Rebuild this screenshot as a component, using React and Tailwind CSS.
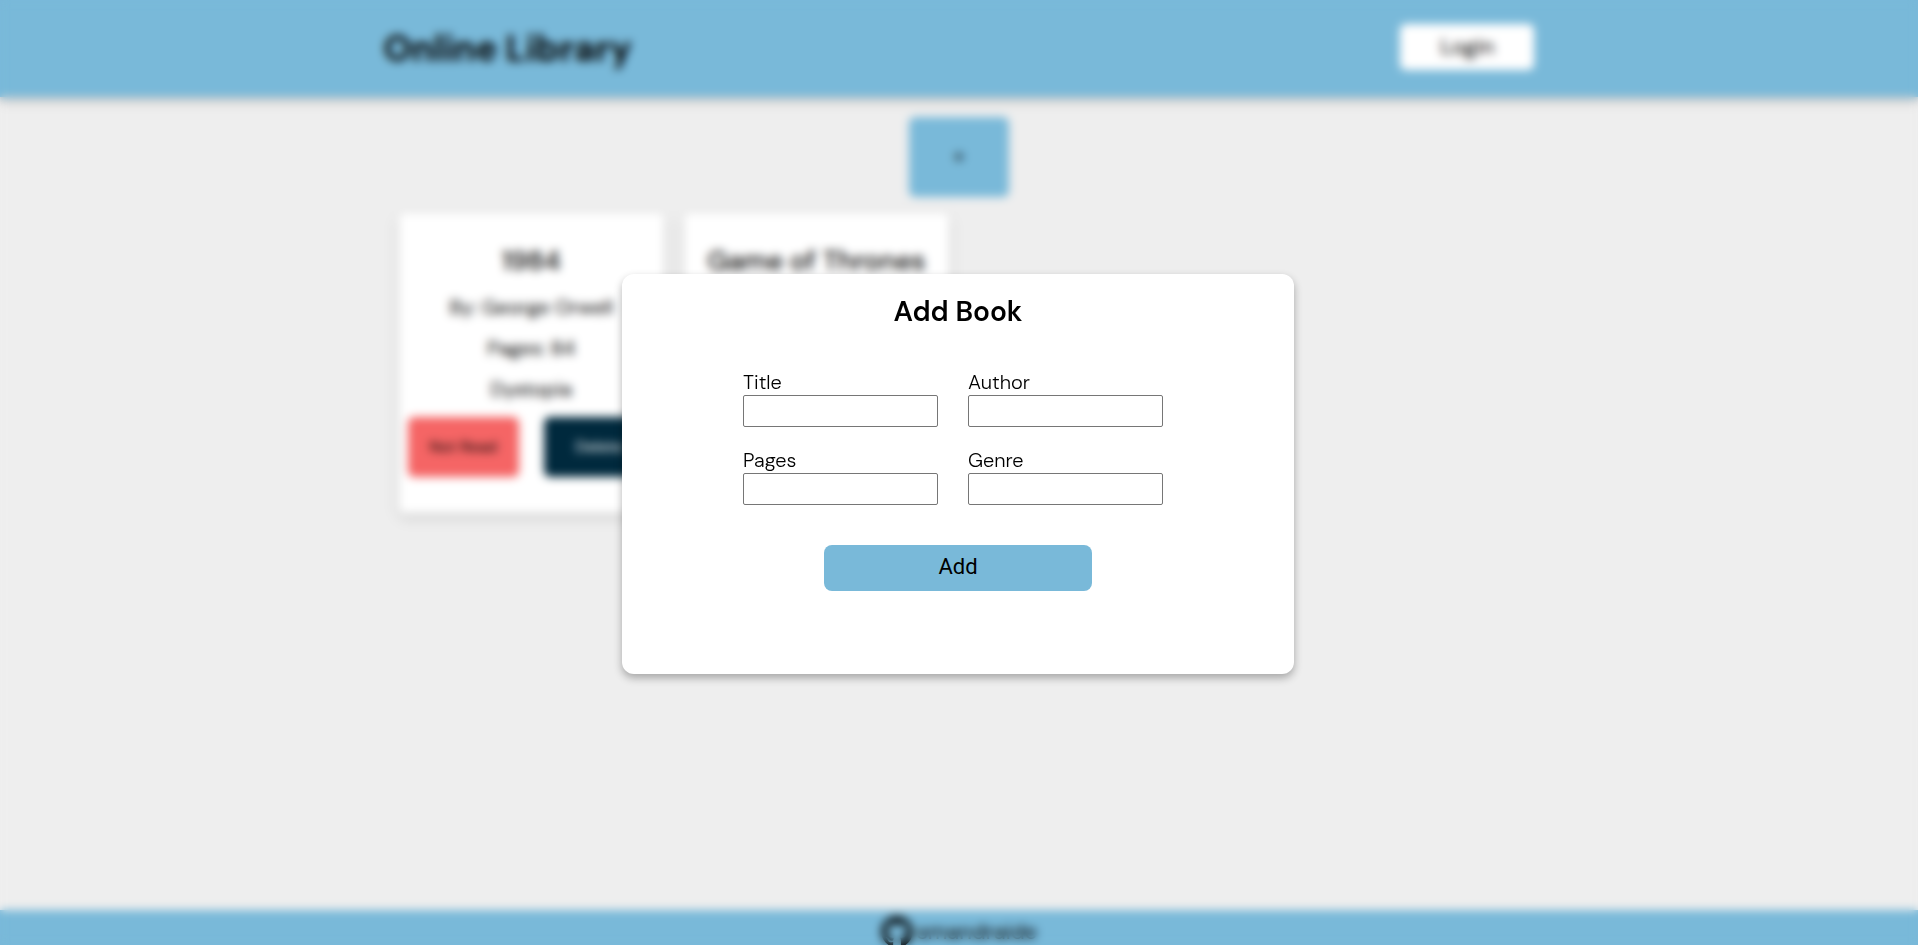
import { FaGithub } from "react-icons/fa";

const books = [
  { title: "1984", author: "George Orwell", pages: 84, genre: "Dystopia" },
  { title: "Game of Thrones", author: "George Martin", pages: 694, genre: "Fantasy" },
];

function Header() {
  return (
    <header className="bg-[#79b9d9] shadow-[0_4px_8px_rgba(0,0,0,0.2)]">
      <div className="mx-auto flex h-[97px] w-3/5 items-center justify-between">
        <h1 className="text-[36px] font-bold">Online Library</h1>
        <button type="button" className="mb-1 h-[46px] w-[134px] rounded-md bg-white text-[22px]">Login</button>
      </div>
    </header>
  );
}

function BookCard({ book }) {
  return (
    <article className="flex h-[300px] flex-col items-center rounded-md bg-white pt-7 text-xl shadow-[0_4px_12px_rgba(0,0,0,0.15)]">
      <h2 className="text-[27px] leading-10 font-medium whitespace-nowrap">{book.title}</h2>
      <div className="mt-3 flex flex-col items-center gap-[13px] leading-7">
        <p>By: {book.author}</p>
        <p>Pages: {book.pages}</p>
        <p>{book.genre}</p>
      </div>
      <div className="mt-[14px] flex w-full justify-between px-[9px] text-base">
        <button type="button" className="h-[60px] w-[111px] rounded-md bg-[#f56565]">Not Read</button>
        <button type="button" className="h-[60px] w-[111px] rounded-md bg-[#00293d] text-white">Delete</button>
      </div>
    </article>
  );
}

function Field({ id, label }) {
  return (
    <div className="flex flex-col">
      <label htmlFor={id} className="text-[20px] leading-[26px] font-light">{label}</label>
      <input id={id} type="text" className="h-8 rounded-[2px] border border-[#767676] bg-white px-2" />
    </div>
  );
}

function AddBookDialog() {
  return (
    <div className="fixed inset-0 flex items-center justify-center pt-[3px] pr-[2px] backdrop-blur-[5px]">
      <form
        role="dialog"
        aria-labelledby="dialog-title"
        onSubmit={(e) => e.preventDefault()}
        className="flex h-[400px] w-[672px] max-w-full flex-col items-center rounded-xl bg-white pt-5 shadow-[0_4px_8px_rgba(0,0,0,0.3)]"
      >
        <h2 id="dialog-title" className="text-[28px] leading-9 font-semibold">Add Book</h2>
        <div className="mt-[39px] mr-[10px] grid grid-cols-[195px_195px] gap-x-[30px] gap-y-5">
          <Field id="title" label="Title" />
          <Field id="author" label="Author" />
          <Field id="pages" label="Pages" />
          <Field id="genre" label="Genre" />
        </div>
        <button type="submit" className="mt-10 h-[46px] w-2/5 rounded-lg bg-[#79b9d9] pb-1 font-[Roboto,sans-serif] text-[22px]">Add</button>
      </form>
    </div>
  );
}

export default function App() {
  return (
    <div className="font-['DM_Sans',Inter,sans-serif] text-black">
      <div className="flex min-h-screen flex-col bg-[#eeeeee]">
        <Header />
        <main className="mx-auto flex w-3/5 grow flex-col items-center px-[15px] pt-5">
          <button type="button" aria-label="Add a book" className="h-20 w-[100px] rounded-md bg-[#79b9d9] pb-1 text-[22px]">+</button>
          <section className="mt-4 grid w-full grid-cols-4 gap-5">
            {books.map((book) => <BookCard key={book.title} book={book} />)}
          </section>
        </main>
        <footer className="flex h-[35px] items-center justify-center bg-[#79b9d9]">
          <a href="#github" className="flex items-center gap-1 pt-2 text-[22px]">
            <FaGithub className="size-8" />
            <span>smandraide</span>
          </a>
        </footer>
      </div>
      <AddBookDialog />
    </div>
  );
}
